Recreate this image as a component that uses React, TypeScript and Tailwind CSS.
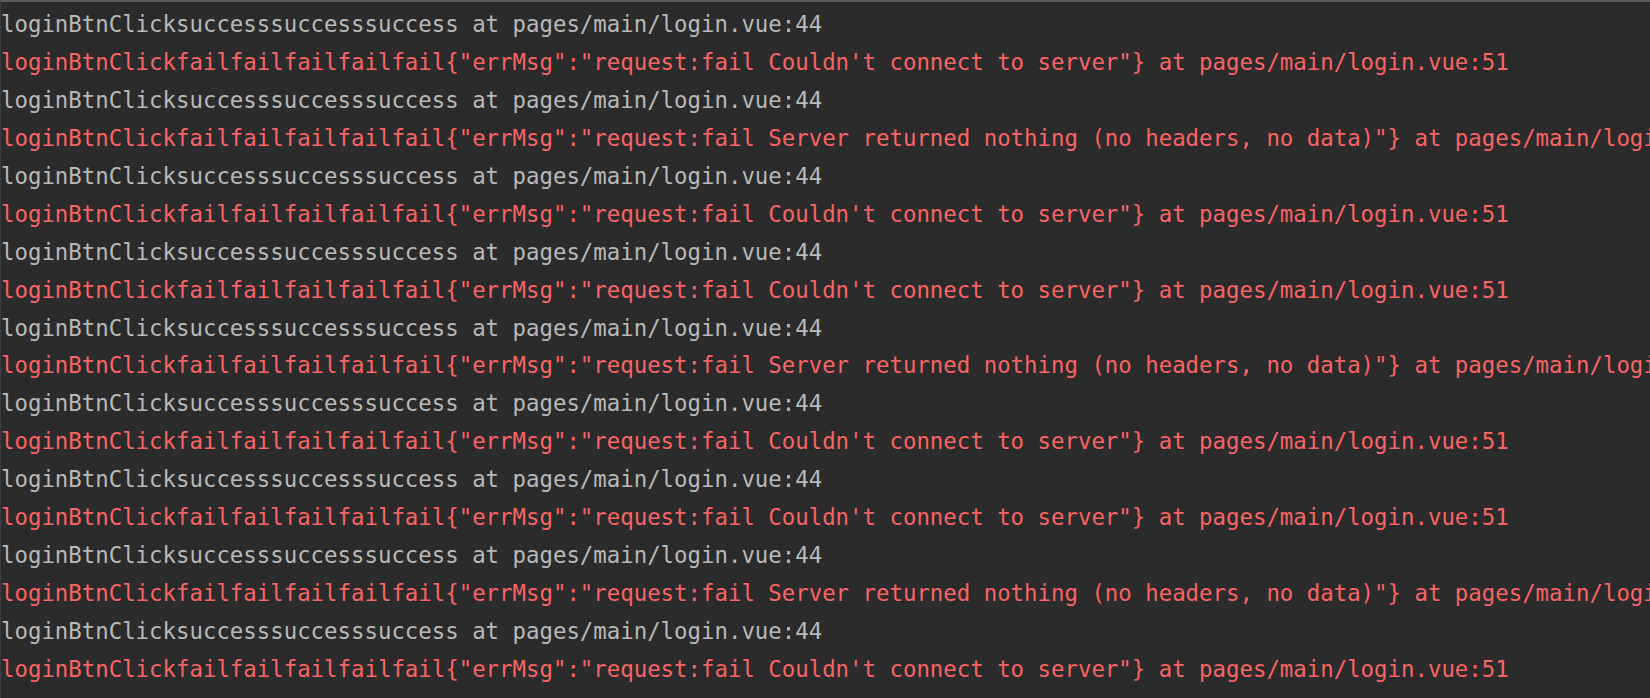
import React from "react";

const OK = "loginBtnClicksuccesssuccesssuccess at pages/main/login.vue:44";
const FAIL1 =
  'loginBtnClickfailfailfailfailfail{"errMsg":"request:fail Couldn\'t connect to server"} at pages/main/login.vue:51';
const FAIL2 =
  'loginBtnClickfailfailfailfailfail{"errMsg":"request:fail Server returned nothing (no headers, no data)"} at pages/main/login.vue:51';

const lines: { t: string; err: boolean }[] = [
  { t: OK, err: false },
  { t: FAIL1, err: true },
  { t: OK, err: false },
  { t: FAIL2, err: true },
  { t: OK, err: false },
  { t: FAIL1, err: true },
  { t: OK, err: false },
  { t: FAIL1, err: true },
  { t: OK, err: false },
  { t: FAIL2, err: true },
  { t: OK, err: false },
  { t: FAIL1, err: true },
  { t: OK, err: false },
  { t: FAIL1, err: true },
  { t: OK, err: false },
  { t: FAIL2, err: true },
  { t: OK, err: false },
  { t: FAIL1, err: true },
];

export default function App() {
  return (
    <div className="w-[1650px] h-[698px] overflow-hidden bg-[#2b2b2b] border-t-2 border-t-[#5c5c5c] border-l border-l-[#3e3e3e]">
      <div className="pt-[4px] font-['DejaVu_Sans_Mono',monospace] text-[22.36px] leading-[37.94px] whitespace-pre">
        {lines.map((l, i) => (
          <div key={i} className={l.err ? "text-[#f96464]" : "text-[#b9b9b9]"}>
            {l.t}
          </div>
        ))}
      </div>
    </div>
  );
}
